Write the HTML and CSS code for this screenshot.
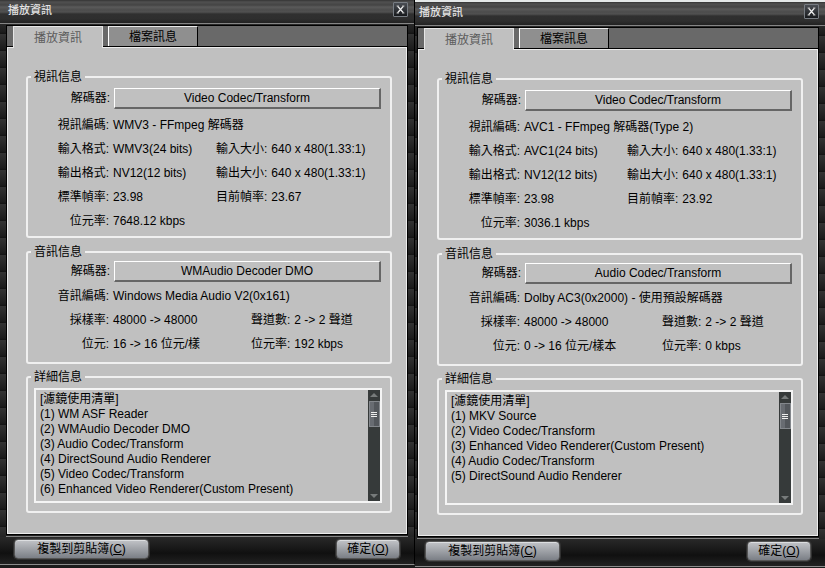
FILE: index.html
```html
<!DOCTYPE html>
<html lang="zh-Hant">
<head>
<meta charset="utf-8">
<title>播放資訊</title>
<link rel="stylesheet" href="styles.css">
</head>
<body>
<main class="desktop">
  <section class="dialog dialog-first">
    <header class="titlebar">
      <h1>播放資訊</h1>
      <button class="close" type="button" aria-label="關閉"><svg viewBox="0 0 9 9" width="9" height="9"><path d="M1.500 1l6 7M7.500 1l-6 7"/><path class="serif" d="M.5 1h2.500M6 1h2.500M.5 8h2.500M6 8h2.500"/></svg></button>
    </header>
    <div class="frame">
      <nav class="tabs">
        <button class="tab active" type="button">播放資訊</button>
        <button class="tab" type="button">檔案訊息</button>
      </nav>
      <div class="page">
        <fieldset class="video">
          <legend>視訊信息</legend>
          <div class="codec"><span class="label">解碼器:</span><button type="button">Video Codec/Transform</button></div>
          <dl>
            <dt>視訊編碼:</dt><dd class="wide">WMV3 - FFmpeg 解碼器</dd>
            <dt>輸入格式:</dt><dd>WMV3(24 bits)</dd><dt>輸入大小:</dt><dd>640 x 480(1.33:1)</dd>
            <dt>輸出格式:</dt><dd>NV12(12 bits)</dd><dt>輸出大小:</dt><dd>640 x 480(1.33:1)</dd>
            <dt>標準幀率:</dt><dd>23.98</dd><dt>目前幀率:</dt><dd>23.67</dd>
            <dt>位元率:</dt><dd class="wide">7648.12 kbps</dd>
          </dl>
        </fieldset>
        <fieldset class="audio">
          <legend>音訊信息</legend>
          <div class="codec"><span class="label">解碼器:</span><button type="button">WMAudio Decoder DMO</button></div>
          <dl>
            <dt>音訊編碼:</dt><dd class="wide">Windows Media Audio V2(0x161)</dd>
            <dt>採樣率:</dt><dd>48000 -&gt; 48000</dd><dt>聲道數:</dt><dd>2 -&gt; 2 聲道</dd>
            <dt>位元:</dt><dd>16 -&gt; 16 位元/樣</dd><dt>位元率:</dt><dd>192 kbps</dd>
          </dl>
        </fieldset>
        <fieldset class="details">
          <legend>詳細信息</legend>
          <div class="listbox">
            <ul>
              <li>[濾鏡使用清單]</li>
              <li>(1) WM ASF Reader</li>
              <li>(2) WMAudio Decoder DMO</li>
              <li>(3) Audio Codec/Transform</li>
              <li>(4) DirectSound Audio Renderer</li>
              <li>(5) Video Codec/Transform</li>
              <li>(6) Enhanced Video Renderer(Custom Present)</li>
            </ul>
            <div class="scrollbar">
              <svg class="arrow" viewBox="0 0 8 4" width="8" height="4"><path d="M4 0l4 4H0z"/></svg>
              <div class="thumb"><i></i><i></i><i></i></div>
              <svg class="arrow down" viewBox="0 0 8 4" width="8" height="4"><path d="M0 0h8L4 4z"/></svg>
            </div>
          </div>
        </fieldset>
      </div>
    </div>
    <footer class="actions">
      <button class="copy" type="button">複製到剪貼簿(<u>C</u>)</button>
      <button class="ok" type="button">確定(<u>O</u>)</button>
    </footer>
  </section>

  <section class="dialog dialog-second">
    <header class="titlebar">
      <h1>播放資訊</h1>
      <button class="close" type="button" aria-label="關閉"><svg viewBox="0 0 9 9" width="9" height="9"><path d="M1.500 1l6 7M7.500 1l-6 7"/><path class="serif" d="M.5 1h2.500M6 1h2.500M.5 8h2.500M6 8h2.500"/></svg></button>
    </header>
    <div class="frame">
      <nav class="tabs">
        <button class="tab active" type="button">播放資訊</button>
        <button class="tab" type="button">檔案訊息</button>
      </nav>
      <div class="page">
        <fieldset class="video">
          <legend>視訊信息</legend>
          <div class="codec"><span class="label">解碼器:</span><button type="button">Video Codec/Transform</button></div>
          <dl>
            <dt>視訊編碼:</dt><dd class="wide">AVC1 - FFmpeg 解碼器(Type 2)</dd>
            <dt>輸入格式:</dt><dd>AVC1(24 bits)</dd><dt>輸入大小:</dt><dd>640 x 480(1.33:1)</dd>
            <dt>輸出格式:</dt><dd>NV12(12 bits)</dd><dt>輸出大小:</dt><dd>640 x 480(1.33:1)</dd>
            <dt>標準幀率:</dt><dd>23.98</dd><dt>目前幀率:</dt><dd>23.92</dd>
            <dt>位元率:</dt><dd class="wide">3036.1 kbps</dd>
          </dl>
        </fieldset>
        <fieldset class="audio">
          <legend>音訊信息</legend>
          <div class="codec"><span class="label">解碼器:</span><button type="button">Audio Codec/Transform</button></div>
          <dl>
            <dt>音訊編碼:</dt><dd class="wide">Dolby AC3(0x2000) - 使用預設解碼器</dd>
            <dt>採樣率:</dt><dd>48000 -&gt; 48000</dd><dt>聲道數:</dt><dd>2 -&gt; 2 聲道</dd>
            <dt>位元:</dt><dd>0 -&gt; 16 位元/樣本</dd><dt>位元率:</dt><dd>0 kbps</dd>
          </dl>
        </fieldset>
        <fieldset class="details">
          <legend>詳細信息</legend>
          <div class="listbox">
            <ul>
              <li>[濾鏡使用清單]</li>
              <li>(1) MKV Source</li>
              <li>(2) Video Codec/Transform</li>
              <li>(3) Enhanced Video Renderer(Custom Present)</li>
              <li>(4) Audio Codec/Transform</li>
              <li>(5) DirectSound Audio Renderer</li>
            </ul>
            <div class="scrollbar">
              <svg class="arrow" viewBox="0 0 8 4" width="8" height="4"><path d="M4 0l4 4H0z"/></svg>
              <div class="thumb"><i></i><i></i><i></i></div>
              <svg class="arrow down" viewBox="0 0 8 4" width="8" height="4"><path d="M0 0h8L4 4z"/></svg>
            </div>
          </div>
        </fieldset>
      </div>
    </div>
    <footer class="actions">
      <button class="copy" type="button">複製到剪貼簿(<u>C</u>)</button>
      <button class="ok" type="button">確定(<u>O</u>)</button>
    </footer>
  </section>
</main>
</body>
</html>
```

FILE: styles.css
```css
* { box-sizing: border-box; }

body {
  margin: 0;
  background: #1c1c1c;
  color: #000;
  font: 12px/15px "Liberation Sans", "Noto Sans CJK TC", sans-serif;
}

button {
  margin: 0;
  padding: 0;
  color: inherit;
  font: inherit;
}

.desktop {
  display: flex;
  align-items: flex-start;
  min-height: 100vh;
  overflow: hidden;
}

/* Dialog chrome */
.dialog {
  flex: 1 1 410px;
  min-width: 0;
  border-bottom: 1px solid #8c8c8c;
  background: repeating-linear-gradient(#333 0, #1c1c1c 15px, #121212 17px);
}

.dialog-first {
  flex-basis: 415px;
  border-right: 1px solid #000;
}

.dialog-second { border-top: 2px solid #e4e8e8; }

.titlebar {
  display: flex;
  align-items: center;
  justify-content: space-between;
  height: 24px;
  padding: 0 6px 4px 8px;
  border-bottom: 1px solid #858585;
  background: linear-gradient(#343434 0, #505050 2px, #444 5px, #5a5a5a 7px, #4c4c4c 10px, #515151 12px, #303030 14px, #2e2e2e 19px, #222 23px);
}

.dialog-second .titlebar { padding-left: 4px; }

.titlebar h1 {
  margin: 0;
  padding-top: 2px;
  color: #e2e2e2;
  font-size: 11px;
  font-weight: 500;
  line-height: 17px;
}

.close {
  display: grid;
  place-items: center;
  width: 15px;
  height: 15px;
  border: 1px solid #777c82;
  border-radius: 1px;
  background: linear-gradient(#4a4e54, #17191c);
}

.close path {
  fill: none;
  stroke: #f0f0f0;
  stroke-width: 1.2;
}

.close .serif {
  stroke: #a8a8a8;
  stroke-width: 1;
}

.frame {
  margin: 1px 6px 0;
  border: 1px solid #000;
  box-shadow: 0 1px 0 #202020, 0 2px 0 #858585;
}

.dialog-second .frame { margin-left: 2px; }

.tabs {
  display: flex;
  gap: 5px;
  height: 21px;
  padding: 0 6px;
  border-bottom: 1px solid #000;
  background: #696969;
}

.tab {
  width: 90px;
  height: 20px;
  padding-top: 2px;
  border: 1px solid #000;
  border-top-color: #e8e8e8;
  border-left-color: #fff;
  border-bottom: 0;
  background: #8f8f8f;
}

.tab.active {
  position: relative;
  height: 22px;
  border: 1px solid #e6e6e6;
  border-bottom: 0;
  background: #c0c0c0;
  color: #5c5c5c;
}

.page {
  padding: 22px 14px 20px 18px;
  border: 1px solid #ececec;
  background: #c0c0c0;
}

/* Grouped information */
fieldset {
  min-width: 0;
  margin: 0;
  padding: 4px 9px 3px 0;
  border: 2px solid #f0f0f0;
  border-radius: 3px;
}

legend {
  height: 14px;
  margin-left: 3px;
  padding: 0 3px;
  line-height: 15px;
}

.codec {
  display: flex;
  gap: 4px;
}

.label {
  width: 82px;
  line-height: 21px;
  text-align: right;
}

.codec button {
  flex: 1;
  height: 21px;
  padding-top: 1px;
  border: 1px solid #fff;
  border-right: 2px solid #666;
  border-bottom: 2px solid #666;
  background: #c0c0c0;
}

dl {
  display: grid;
  grid-template-columns: 81px 99px auto 1fr;
  grid-auto-rows: 24px;
  column-gap: 4px;
  margin: 4px 0 0;
  line-height: 25px;
  white-space: nowrap;
}

dt { text-align: right; }
dd { margin: 0; }
.wide { grid-column: span 3; }

.audio {
  margin-top: 7px;
  padding-top: 2px;
  padding-bottom: 6px;
}

.audio dl {
  grid-template-columns: 81px 134px auto 1fr;
  margin-top: 2px;
}

.details {
  margin-top: 6px;
  padding: 4px 8px 8px 6px;
}

.details legend { margin-left: -3px; }

.listbox {
  display: flex;
  border: 2px solid #f4f4f4;
}

.listbox ul {
  flex: 1;
  min-width: 0;
  height: 111px;
  margin: 0;
  padding: 2px 4px;
  overflow: hidden;
  list-style: none;
  white-space: nowrap;
}

.scrollbar {
  display: flex;
  flex-direction: column;
  align-items: center;
  width: 12px;
  padding: 3px 0;
  background: #363a3a;
}

.arrow { fill: #777b7b; }
.down { margin-top: auto; }

.thumb {
  display: flex;
  flex-direction: column;
  align-items: center;
  justify-content: center;
  gap: 1px;
  width: 11px;
  height: 26px;
  margin-top: 4px;
  border: 1px solid #83878c;
  background: linear-gradient(90deg, #686c72 45%, #53575c 50%);
}

.thumb i {
  width: 6px;
  height: 1px;
  background: #eee;
}

/* Bottom buttons */
.actions {
  display: flex;
  align-items: flex-start;
  justify-content: space-between;
  height: 27px;
  margin-top: 2px;
  padding: 2px 14px 0;
  background: linear-gradient(#292929, #101010 60%, #222);
}

.dialog-second .actions { padding-left: 10px; }

.actions button {
  height: 20px;
  border: 1px solid #555;
  border-radius: 4px;
  background: linear-gradient(#c2c4c8, #a2a5aa 45%, #7b7f86);
  box-shadow: inset 0 1px 0 #dcdee0, 0 0 0 1px #303030;
}

.copy { width: 135px; }
.ok { width: 64px; }
```
